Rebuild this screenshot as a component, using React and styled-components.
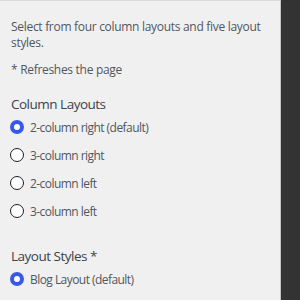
import React from "react";
import styled, { createGlobalStyle } from "styled-components";

const Global = createGlobalStyle`
  html, body {
    margin: 0;
    padding: 0;
    background: #333333;
    font-family: "Open Sans", "Noto Sans", sans-serif;
  }
`;

const Page = styled.div`
  display: flex;
  width: 300px;
  height: 300px;
  overflow: hidden;
`;

const Panel = styled.div`
  width: 281px;
  flex-shrink: 0;
  background: #f0f0f0;
  border-top: 1px solid #dcdcde;
  border-right: 1px solid #c3c4c7;
  padding: 18px 10px 0 11px;
  box-sizing: border-box;
  color: #50575e;
`;

const Para = styled.p`
  margin: 0 0 ${(p) => p.gap || 0}px 0;
  font-size: 12px;
  line-height: 16px;
  letter-spacing: -0.3px;
`;

const Heading = styled.h3`
  margin: ${(p) => p.top}px 0 5px 0;
  font-size: 13.5px;
  font-weight: 500;
  line-height: 18px;
  letter-spacing: -0.5px;
  color: #3c434a;
`;

const List = styled.div`
  display: flex;
  flex-direction: column;
  gap: 10px;
`;

const Option = styled.label`
  display: flex;
  align-items: center;
  gap: 6px;
  height: 18px;
  margin-left: -1px;
  font-size: 12px;
  letter-spacing: -0.55px;
  color: #50575e;
`;

const Radio = styled.span`
  width: 14px;
  height: 14px;
  border-radius: 50%;
  box-sizing: border-box;
  background: #fff;
  border: ${(p) => (p.checked ? "4px solid #3858e9" : "1px solid #1e1e1e")};
  flex-shrink: 0;
`;

const columns = [
  "2-column right (default)",
  "3-column right",
  "2-column left",
  "3-column left",
];

export default function App() {
  return (
    <Page>
      <Global />
      <Panel>
        <Para gap={11}>
          Select from four column layouts and five layout styles.
        </Para>
        <Para>* Refreshes the page</Para>
        <Heading top={17}>Column Layouts</Heading>
        <List>
          {columns.map((c, i) => (
            <Option key={c}>
              <Radio checked={i === 0} />
              {c}
            </Option>
          ))}
        </List>
        <Heading top={27}>Layout Styles *</Heading>
        <List>
          <Option>
            <Radio checked />
            Blog Layout (default)
          </Option>
        </List>
      </Panel>
    </Page>
  );
}
